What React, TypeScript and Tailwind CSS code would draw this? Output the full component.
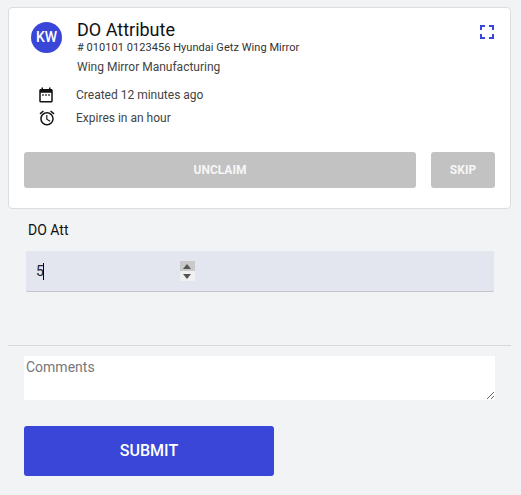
import { MdAlarm, MdDateRange, MdFullscreen } from "react-icons/md";

// Task card for the claimed item, with the attribute form underneath.
export default function App() {
  return (
    <div className="h-[495px] w-[521px] overflow-hidden bg-[#f2f3f5] font-['Roboto',sans-serif] text-[#111]">
      <section className="mx-[8px] mt-[7px] h-[202px] w-[503px] rounded-[4px] border border-[#dcdde0] bg-white px-[15px] pt-[14px]">
        <div className="flex items-start">
          <div className="ml-[7px] flex h-[31px] w-[31px] shrink-0 items-center justify-center rounded-full bg-[#3a46d8] text-[14px] font-medium text-white">
            KW
          </div>
          <div className="ml-[15px] flex-1">
            <h1 className="mt-[-2px] text-[18px] leading-[19px] text-[#111]">DO Attribute</h1>
            <p className="mt-[2px] text-[11px] leading-[14px] tracking-[0.05px] text-[#333]"># 010101 0123456 Hyundai Getz Wing Mirror</p>
            <p className="mt-[5px] text-[12px] leading-[14px] text-[#444]">Wing Mirror Manufacturing</p>
          </div>
          <MdFullscreen className="mr-[-4px] mt-[-2px] text-[24px] text-[#3a46d8]" />
        </div>

        <div className="mt-[12px] flex items-center">
          <MdDateRange className="ml-[13px] h-[18px] w-[18px] text-[#111]" />
          <span className="ml-[21px] text-[12px] leading-[18px] text-[#444]">Created 12 minutes ago</span>
        </div>
        <div className="mt-[5px] flex items-center">
          <MdAlarm className="ml-[14px] h-[18px] w-[18px] text-[#111]" />
          <span className="ml-[20px] text-[12px] leading-[18px] text-[#444]">Expires in an hour</span>
        </div>

        <div className="mt-[25px] flex gap-[15px]">
          <button className="h-[36px] w-[392px] rounded-[3px] bg-[#c2c2c2] text-[12px] font-bold text-[#f7f7f7]">UNCLAIM</button>
          <button className="h-[36px] w-[64px] rounded-[3px] bg-[#c2c2c2] text-[12px] font-bold text-[#f7f7f7]">SKIP</button>
        </div>
      </section>

      <label className="ml-[28px] mt-[13px] block text-[14px] leading-[16px] text-[#111]">DO Att</label>

      <div className="ml-[26px] mt-[13px] flex h-[41px] w-[468px] items-center rounded-[2px] border-b border-[#c4c5cb] bg-[#e4e6ef] pl-[10px]">
        <span className="text-[14px] leading-[16px] text-[#222]">5</span>
        <span className="ml-[-1px] h-[17px] w-px bg-black" />
        <div className="ml-[136px] flex h-[20px] w-[15px] flex-col">
          <div className="flex h-[10px] items-center justify-center bg-[#c9c9c9]">
            <span className="h-0 w-0 border-x-[4px] border-b-[5px] border-x-transparent border-b-[#555]" />
          </div>
          <div className="flex h-[10px] items-center justify-center bg-[#f0f0f0]">
            <span className="h-0 w-0 border-x-[4px] border-t-[5px] border-x-transparent border-t-[#555]" />
          </div>
        </div>
      </div>

      <hr className="ml-[8px] mt-[53px] w-[503px] border-t border-[#d6d7da]" />

      <textarea
        placeholder="Comments"
        className="ml-[24px] mt-[10px] block h-[44px] w-[471px] bg-white px-[2px] pt-[3px] text-[14px] leading-[16px] outline-none placeholder:text-[#777]"
      />

      <button className="ml-[24px] mt-[26px] block h-[50px] w-[250px] rounded-[3px] bg-[#3a46d8] text-[16px] font-medium text-white">
        SUBMIT
      </button>
    </div>
  );
}
